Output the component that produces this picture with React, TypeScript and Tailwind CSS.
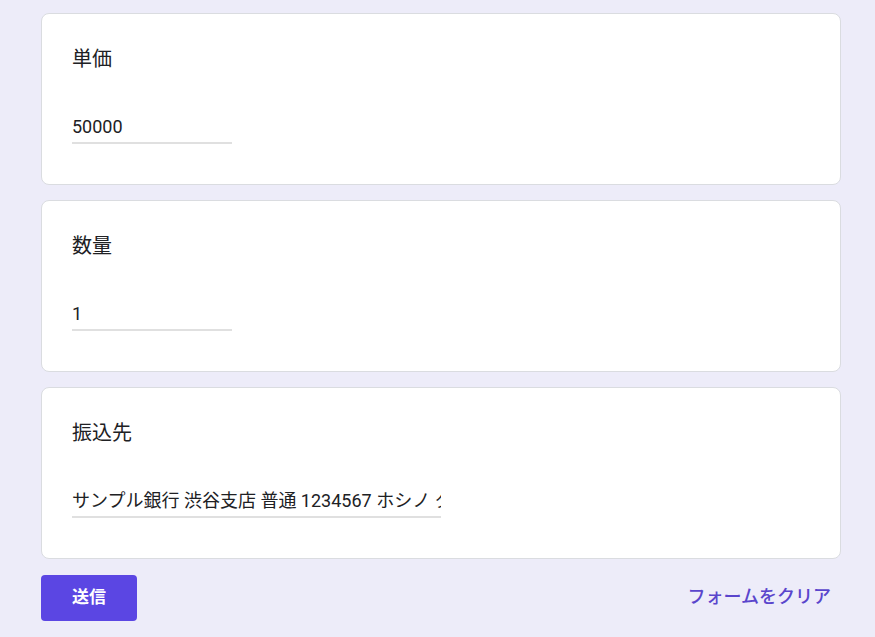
import * as React from "react";

const FONT = { fontFamily: 'Roboto, "Noto Sans CJK JP", sans-serif' };

const fields = [
  { label: "単価", value: "50000", width: "w-[160px]" },
  { label: "数量", value: "1", width: "w-[160px]" },
  {
    label: "振込先",
    value: "サンプル銀行 渋谷支店 普通 1234567 ホシノ タロウ",
    width: "w-[369px]",
  },
];

function FieldCard({ label, value, width }: { label: string; value: string; width: string }) {
  return (
    <div className="rounded-lg border border-[#dadce0] bg-white px-[30px] pt-[31px] pb-[40px]">
      <div className="text-[20px] leading-[28px] text-[#202124]">{label}</div>
      <div
        className={`mt-[42px] ${width} overflow-hidden whitespace-nowrap border-b-2 border-[#e0e0e0] pb-[3px] text-[18px] leading-[24px] text-[#202124]`}
      >
        {value}
      </div>
    </div>
  );
}

export default function App() {
  return (
    <div className="min-h-[637px] w-full bg-[#edecf9] pt-[13px] pl-[41px]" style={FONT}>
      <div className="flex w-[800px] flex-col gap-[15px]">
        {fields.map((f) => (
          <FieldCard key={f.label} label={f.label} value={f.value} width={f.width} />
        ))}
      </div>
      <div className="mt-[16px] flex w-[800px] items-center justify-between">
        <button
          type="button"
          className="h-[46px] w-[96px] rounded-[4px] bg-[#5b46e3] text-[17px] font-bold text-white"
        >
          送信
        </button>
        <button
          type="button"
          className="mr-[10px] mb-[4px] text-[18px] font-medium text-[#5a45cc]"
        >
          フォームをクリア
        </button>
      </div>
    </div>
  );
}
